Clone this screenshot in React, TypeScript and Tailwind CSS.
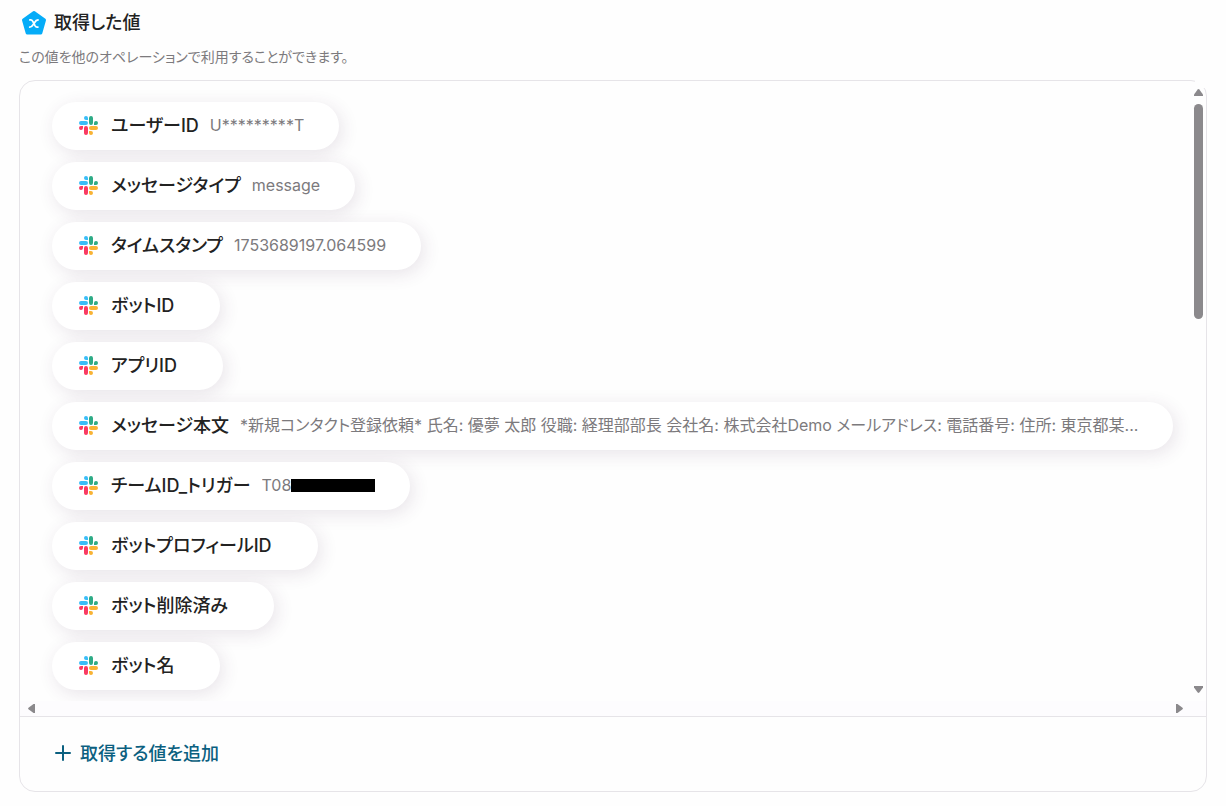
import React from "react";
import { Plus } from "lucide-react";

interface OutputValue {
  label: string;
  value?: string;
  masked?: boolean;
}

const outputs: OutputValue[] = [
  { label: "ユーザーID", value: "U*********T" },
  { label: "メッセージタイプ", value: "message" },
  { label: "タイムスタンプ", value: "1753689197.064599" },
  { label: "ボットID" },
  { label: "アプリID" },
  {
    label: "メッセージ本文",
    value:
      "*新規コンタクト登録依頼* 氏名: 優夢 太郎 役職: 経理部部長 会社名: 株式会社Demo メールアドレス: 電話番号: 住所: 東京都某...",
  },
  { label: "チームID_トリガー", value: "T08", masked: true },
  { label: "ボットプロフィールID" },
  { label: "ボット削除済み" },
  { label: "ボット名" },
];

const SlackIcon = () => (
  <svg viewBox="0 0 24 24" className="mx-px size-[19px] shrink-0" aria-hidden="true">
    <path
      fill="#fa3a62"
      d="M5.042 15.165a2.528 2.528 0 0 1-2.52 2.523A2.528 2.528 0 0 1 0 15.165a2.527 2.527 0 0 1 2.522-2.52h2.52v2.52zM6.313 15.165a2.527 2.527 0 0 1 2.521-2.52 2.527 2.527 0 0 1 2.521 2.52v6.313A2.528 2.528 0 0 1 8.834 24a2.528 2.528 0 0 1-2.521-2.522v-6.313z"
    />
    <path
      fill="#38bdf8"
      d="M8.834 5.042a2.528 2.528 0 0 1-2.521-2.52A2.528 2.528 0 0 1 8.834 0a2.528 2.528 0 0 1 2.521 2.522v2.52H8.834zM8.834 6.313a2.528 2.528 0 0 1 2.521 2.521 2.528 2.528 0 0 1-2.521 2.521H2.522A2.528 2.528 0 0 1 0 8.834a2.528 2.528 0 0 1 2.522-2.521h6.312z"
    />
    <path
      fill="#2eab86"
      d="M18.956 8.834a2.528 2.528 0 0 1 2.522-2.521A2.528 2.528 0 0 1 24 8.834a2.528 2.528 0 0 1-2.522 2.521h-2.522V8.834zM17.688 8.834a2.528 2.528 0 0 1-2.523 2.521 2.527 2.527 0 0 1-2.52-2.521V2.522A2.527 2.527 0 0 1 15.165 0a2.528 2.528 0 0 1 2.523 2.522v6.312z"
    />
    <path
      fill="#f8b334"
      d="M15.165 18.956a2.528 2.528 0 0 1 2.523 2.522A2.528 2.528 0 0 1 15.165 24a2.527 2.527 0 0 1-2.52-2.522v-2.522h2.52zM15.165 17.688a2.527 2.527 0 0 1-2.52-2.523 2.526 2.526 0 0 1 2.52-2.52h6.313A2.527 2.527 0 0 1 24 15.165a2.528 2.528 0 0 1-2.522 2.523h-6.313z"
    />
  </svg>
);

const VariableIcon = () => (
  <svg viewBox="0 0 26 26" className="size-[26px] shrink-0" aria-hidden="true">
    <path
      d="M13 2.5 23.5 10 19.8 23H6.2L2.5 10Z"
      fill="#05acf8"
      stroke="#05acf8"
      strokeWidth="3"
      strokeLinejoin="round"
    />
    <path
      d="M8.9 9.900h.9c1 0 1.500.6 2 1.500l2.200 4.200c.5.9 1 1.500 2 1.500h.9M17 9.900c-2.100 0-2.900 1.700-4.100 3.600s-2.100 3.600-4.200 3.600"
      fill="none"
      stroke="#fff"
      strokeWidth="1.8"
      strokeLinecap="round"
    />
  </svg>
);

const OutputPill: React.FC<OutputValue> = ({ label, value, masked }) => (
  <li className="flex h-12 w-fit max-w-full shrink-0 items-center rounded-full bg-white pb-0.5 pl-[26px] pr-[35px] shadow-[3px_4px_18px_rgba(70,45,85,0.12)]">
    <SlackIcon />
    <span className="ml-3 shrink-0 whitespace-nowrap text-[18px] font-medium text-[#222]">{label}</span>
    <span className="ml-[11px] flex min-w-0 items-center whitespace-nowrap text-[16px] text-[#7c7a7d]">
      <span className="truncate">{value}</span>
      {masked && <span className="h-[13px] w-[84px] shrink-0 bg-black" />}
    </span>
  </li>
);

const VerticalScrollbar = () => (
  <div className="flex w-4 shrink-0 flex-col items-center py-2" aria-hidden="true">
    <svg viewBox="0 0 9 7" className="h-[7px] w-[9px]">
      <path d="M3.7.5Q4.5-.3 5.3.5L9 5.500V7H0V5.500Z" fill="#8b898c" />
    </svg>
    <div className="mt-2 min-h-0 w-full flex-1">
      <div className="mx-auto h-[37%] w-[9px] rounded-full bg-[#8b898c]" />
    </div>
    <svg viewBox="0 0 9 7" className="h-[7px] w-[9px]">
      <path d="M3.7 6.500Q4.5 7.300 5.3 6.500L9 1.500V0H0V1.500Z" fill="#8b898c" />
    </svg>
  </div>
);

const HorizontalScrollbar = () => (
  <div className="flex h-[15px] shrink-0 items-center justify-between bg-[#fdfcfe] pl-2 pr-[23px]" aria-hidden="true">
    <svg viewBox="0 0 7 9" className="h-[9px] w-[7px]">
      <path d="M.5 3.7Q-.3 4.500.5 5.300L5.500 9H7V0H5.500Z" fill="#8b898c" />
    </svg>
    <svg viewBox="0 0 7 9" className="h-[9px] w-[7px]">
      <path d="M6.500 3.7Q7.300 4.500 6.500 5.300L1.500 9H0V0H1.500Z" fill="#8b898c" />
    </svg>
  </div>
);

export default function App() {
  return (
    <main className="flex h-screen flex-col bg-[#fefefe] px-[19px] pt-[10px] pb-[14px] font-['Inter','Noto_Sans_CJK_JP',sans-serif] [font-feature-settings:'palt']">
      <header>
        <h1 className="flex items-center gap-[7px] pl-0.5 text-[18px] leading-[26px] font-medium text-[#222]">
          <VariableIcon />
          取得した値
        </h1>
        <p className="mt-[10px] text-[14px] leading-[22px] text-[#7c7a7d]">
          この値を他のオペレーションで利用することができます。
        </p>
      </header>

      <section className="relative mt-3 flex min-h-0 flex-1 flex-col rounded-2xl border border-[#e6e4e8]">
        <span className="absolute -top-px -right-px h-2 w-3 bg-[#fefefe]" />
        <div className="flex min-h-0 flex-1">
          <ul className="flex min-w-0 flex-1 flex-col gap-3 overflow-hidden py-[21px] pl-8 pr-3">
            {outputs.map((item) => (
              <OutputPill key={item.label} {...item} />
            ))}
          </ul>
          <VerticalScrollbar />
        </div>
        <HorizontalScrollbar />
        <div className="flex h-[75px] shrink-0 items-center border-t border-[#e6e4e8] pb-0.5 pl-[31px]">
          <button type="button" className="flex items-center gap-[5px] text-[18px] font-medium text-[#0b6080]">
            <Plus className="size-6" strokeWidth={2} />
            取得する値を追加
          </button>
        </div>
      </section>
    </main>
  );
}
